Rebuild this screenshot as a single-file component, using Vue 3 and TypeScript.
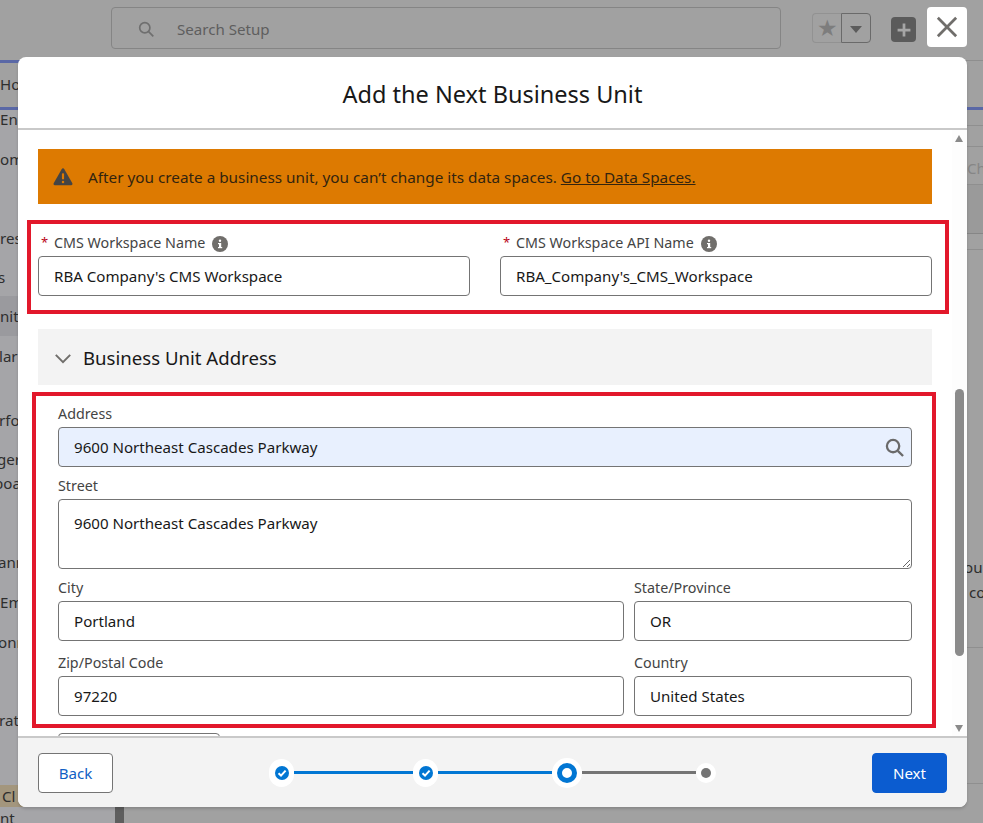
<script setup lang="ts">
import { reactive } from 'vue'

interface SideRow {
  label: string
  height: number
  gap: number
  shift?: number
  tone?: 'active' | 'tan'
}

interface Step {
  id: number
  state: 'done' | 'current' | 'todo'
  lineWidth: number
}

// dimmed setup page behind the modal, only the clipped edge shows
const sideRows: SideRow[] = [
  { label: 'Eng', height: 18, gap: 0 },
  { label: 'om', height: 40, gap: 11 },
  { label: 'res', height: 40, gap: 39 },
  { label: 's', height: 38, gap: 0, shift: -2 },
  { label: 'nit', height: 40, gap: 0, tone: 'active' },
  { label: 'lar', height: 40, gap: 0, shift: -1 },
  { label: 'rfo', height: 40, gap: 24, shift: -1 },
  { label: 'ger', height: 24, gap: 7, shift: -3 },
  { label: 'boa', height: 24, gap: 0, shift: -6 },
  { label: 'ann', height: 40, gap: 47, shift: -2 },
  { label: 'Em', height: 40, gap: 0 },
  { label: 'onn', height: 39, gap: 0, shift: -2 },
  { label: 'rati', height: 40, gap: 39, shift: -1 },
  { label: 'Cl', height: 22, gap: 45, tone: 'tan' },
  { label: 'nt', height: 22, gap: 0 },
]

const steps: Step[] = [
  { id: 1, state: 'done', lineWidth: 119 },
  { id: 2, state: 'done', lineWidth: 114 },
  { id: 3, state: 'current', lineWidth: 114 },
  { id: 4, state: 'todo', lineWidth: 0 },
]

const form = reactive({
  workspaceName: "RBA Company's CMS Workspace",
  workspaceApiName: "RBA_Company's_CMS_Workspace",
  address: '9600 Northeast Cascades Parkway',
  street: '9600 Northeast Cascades Parkway',
  city: 'Portland',
  state: 'OR',
  zip: '97220',
  country: 'United States',
})
</script>

<template>
  <div class="page">
    <header class="top-bar">
      <div class="search">
        <svg class="search-icon" viewBox="0 0 20 20" aria-hidden="true">
          <circle cx="8" cy="8" r="6" />
          <path d="M12.5 12.5 18 18" />
        </svg>
        <span>Search Setup</span>
      </div>
      <div class="favorites">
        <span class="fav-star">★</span>
        <span class="fav-menu"><i></i></span>
      </div>
      <span class="add-btn">
        <svg viewBox="0 0 24 24" aria-hidden="true"><path d="M12 5v14M5 12h14" /></svg>
      </span>
      <span class="close-btn">
        <svg viewBox="0 0 24 24" aria-hidden="true"><path d="M2 2l20 20M22 2 2 22" /></svg>
      </span>
    </header>

    <nav class="nav-bar"><span class="home-tab">Ho</span></nav>

    <div class="setup">
      <aside class="sidebar">
        <div
          v-for="row in sideRows"
          :key="row.label"
          class="side-row"
          :class="row.tone"
          :style="{ height: `${row.height}px`, marginTop: `${row.gap}px`, textIndent: `${row.shift ?? 0}px` }"
        >
          <span>{{ row.label }}</span>
        </div>
        <span class="side-thumb"></span>
      </aside>

      <main class="content">
        <div class="rule-row r15"></div>
        <div class="rule-row r21"></div>
        <div class="rule-row r38 faint">Ch</div>
        <div class="rule-row r49 dark"></div>
        <div class="rule-row r16"></div>
        <div class="rule-row para">
          <p>ou</p>
          <p class="indent">co</p>
        </div>
        <div class="rule-row r136"></div>
      </main>
    </div>

    <section class="modal">
      <h1 class="modal-title">Add the Next Business Unit</h1>

      <div class="modal-body">
        <div class="banner">
          <svg class="warn-icon" viewBox="0 0 24 22" aria-hidden="true">
            <path class="warn-shape" d="M12 1.2c.7 0 1.2.4 1.6 1l9.6 16.9c.6 1.1-.1 2.4-1.4 2.4H2.2C.9 21.500.2 20.200.8 19.100L10.400 2.200c.4-.6.9-1 1.600-1z" />
            <rect class="warn-mark" x="10.700" y="7" width="2.600" height="7.500" rx="1" />
            <circle class="warn-mark" cx="12" cy="17.500" r="1.500" />
          </svg>
          <span>After you create a business unit, you can’t change its data spaces. <a href="#">Go to Data Spaces.</a></span>
        </div>

        <div class="name-row">
          <div class="field">
            <label class="label"><em>*</em><span>CMS Workspace Name</span>
              <svg class="info" viewBox="0 0 16 16" aria-hidden="true">
                <circle cx="8" cy="8" r="8" />
                <rect x="7" y="7" width="2.200" height="5" />
                <rect x="6" y="7" width="2" height="1.200" />
                <rect x="6" y="11" width="4.200" height="1.200" />
                <circle class="info-dot" cx="8" cy="4.700" r="1.200" />
              </svg>
            </label>
            <input v-model="form.workspaceName" type="text" />
          </div>
          <div class="field">
            <label class="label"><em>*</em><span>CMS Workspace API Name</span>
              <svg class="info" viewBox="0 0 16 16" aria-hidden="true">
                <circle cx="8" cy="8" r="8" />
                <rect x="7" y="7" width="2.200" height="5" />
                <rect x="6" y="7" width="2" height="1.200" />
                <rect x="6" y="11" width="4.200" height="1.200" />
                <circle class="info-dot" cx="8" cy="4.700" r="1.200" />
              </svg>
            </label>
            <input v-model="form.workspaceApiName" type="text" />
          </div>
          <span class="callout callout-names"></span>
        </div>

        <div class="section-head">
          <svg viewBox="0 0 20 12" aria-hidden="true"><path d="M2 2l8 8 8-8" /></svg>
          <span>Business Unit Address</span>
        </div>

        <div class="address">
          <div class="field">
            <label class="label">Address</label>
            <div class="lookup">
              <input v-model="form.address" class="autofilled" type="text" />
              <svg viewBox="0 0 20 20" aria-hidden="true">
                <circle cx="8.500" cy="8.500" r="6.500" />
                <path d="M13.500 13.500 19 19" />
              </svg>
            </div>
          </div>
          <div class="field">
            <label class="label">Street</label>
            <textarea v-model="form.street"></textarea>
          </div>
          <div class="split">
            <div class="field">
              <label class="label">City</label>
              <input v-model="form.city" type="text" />
            </div>
            <div class="field">
              <label class="label">State/Province</label>
              <input v-model="form.state" type="text" />
            </div>
          </div>
          <div class="split zip-row">
            <div class="field">
              <label class="label">Zip/Postal Code</label>
              <input v-model="form.zip" type="text" />
            </div>
            <div class="field">
              <label class="label">Country</label>
              <input v-model="form.country" type="text" />
            </div>
          </div>
          <span class="callout callout-address"></span>
          <div class="next-field"></div>
        </div>

        <div class="scrollbar">
          <i class="arrow up"></i>
          <i class="thumb"></i>
          <i class="arrow down"></i>
        </div>
      </div>

      <footer class="modal-footer">
        <button type="button" class="btn back">Back</button>
        <ol class="stepper">
          <template v-for="step in steps" :key="step.id">
            <li class="step" :class="step.state">
              <span class="dot">
                <svg v-if="step.state === 'done'" viewBox="0 0 14 14" aria-hidden="true">
                  <path d="M3.500 7.300 6 9.600l4.600-5" />
                </svg>
              </span>
            </li>
            <li
              v-if="step.lineWidth"
              class="line"
              :class="{ on: step.state === 'done' }"
              :style="{ width: `${step.lineWidth}px` }"
            ></li>
          </template>
        </ol>
        <button type="button" class="btn next">Next</button>
      </footer>
    </section>
  </div>
</template>

<style scoped>
.page {
  position: relative;
  width: 983px;
  height: 823px;
  overflow: hidden;
  background: #a1a1a1;
  color: #2e2e2e;
  font-family: "Noto Sans", "Open Sans", sans-serif;
  font-size: 15.1px;
}

/* background page */
.top-bar {
  display: flex;
  align-items: center;
  height: 60px;
  padding: 0 16px 4px 111px;
  box-sizing: border-box;
}

.search {
  display: flex;
  align-items: center;
  gap: 22px;
  width: 670px;
  height: 42px;
  box-sizing: border-box;
  padding: 2px 0 0 26px;
  border: 1px solid #858585;
  border-radius: 4px;
  color: #5e5e5e;
  font-size: 15.1px;
}

.search-icon {
  width: 17px;
  height: 17px;
  fill: none;
  stroke: #6f6f6f;
  stroke-width: 2;
}

.favorites {
  display: flex;
  width: 59px;
  height: 30px;
  margin-left: 31px;
}

.fav-star {
  width: 29px;
  box-sizing: border-box;
  border: 1px solid #929292;
  border-right: 0;
  border-radius: 4px 0 0 4px;
  color: #7d7d7d;
  font-size: 23px;
  line-height: 27px;
  text-align: center;
}

.fav-menu {
  display: flex;
  align-items: center;
  justify-content: center;
  width: 30px;
  box-sizing: border-box;
  border: 1px solid #6a6a6a;
  border-radius: 0 4px 4px 0;
}

.fav-menu i {
  margin-top: 3px;
  border: 6px solid transparent;
  border-top: 7px solid #5c5c5c;
  border-bottom: 0;
}

.add-btn {
  display: flex;
  align-items: center;
  justify-content: center;
  width: 25px;
  height: 25px;
  margin: 3px 0 0 20px;
  border-radius: 4px;
  background: #5b5b5b;
}

.add-btn svg {
  width: 22px;
  height: 22px;
  fill: none;
  stroke: #a6a6a6;
  stroke-width: 3;
}

.close-btn {
  display: flex;
  align-items: center;
  justify-content: center;
  width: 40px;
  height: 40px;
  margin: 0 0 2px 11px;
  border-radius: 4px;
  background: #fff;
}

.close-btn svg {
  width: 22px;
  height: 22px;
  fill: none;
  stroke: #706e6b;
  stroke-width: 3;
}

.nav-bar {
  height: 50px;
  box-sizing: border-box;
  border-top: 1px solid #8e8e8e;
  border-bottom: 3px solid #5a68a6;
}

.home-tab {
  display: block;
  width: 40px;
  height: 46px;
  box-sizing: border-box;
  margin-top: -1px;
  border-top: 3px solid #5a68a6;
  line-height: 42px;
}

.setup {
  display: flex;
}

.sidebar {
  position: relative;
  flex: none;
  width: 124px;
  height: 713px;
  background: #a5a5a8;
}

.side-row {
  display: flex;
  align-items: center;
  overflow: hidden;
  white-space: nowrap;
}

.side-row span {
  display: block;
}

.side-row.active {
  background: #9a9a9e;
}

.side-row.tan {
  padding-left: 2px;
  background: #a3967d;
}

.side-thumb {
  position: absolute;
  top: 697px;
  right: 0;
  width: 9px;
  height: 16px;
  background: #5e5e5e;
}

.content {
  flex: 1;
  padding-left: 843px;
}

.rule-row {
  margin-left: -843px;
  padding-left: 843px;
  border-bottom: 1px solid #8f8f8f;
  box-sizing: border-box;
}

.r15 { height: 16px; }
.r21 { height: 21px; }
.r38 { display: flex; align-items: center; height: 38px; padding-top: 4px; }
.r49 { height: 49px; }
.r16 { height: 16px; }
.r136 { height: 136px; }
.faint { color: #868686; }
.dark { background: #9a9a9a; border-bottom-color: #868686; }

.para {
  height: 398px;
  padding-top: 305px;
  line-height: 25px;
}

.para p {
  margin: 0;
  text-indent: -3px;
}

.para .indent {
  text-indent: 2px;
}

/* modal */
.modal {
  position: absolute;
  top: 57px;
  left: 18px;
  display: flex;
  flex-direction: column;
  width: 949px;
  height: 750px;
  overflow: hidden;
  border-radius: 8px;
  background: #fff;
  box-shadow: 0 2px 3px rgba(0, 0, 0, 0.16);
}

.modal-title {
  flex: none;
  height: 73px;
  margin: 0;
  box-sizing: border-box;
  border-bottom: 2px solid #c9c9c9;
  color: #181818;
  font-size: 23.500px;
  font-weight: 400;
  line-height: 75px;
  text-align: center;
}

.modal-body {
  position: relative;
  flex: 1;
  min-height: 0;
  overflow: hidden;
  padding: 19px 35px 0 20px;
}

.banner {
  display: flex;
  align-items: center;
  gap: 15px;
  height: 55px;
  padding-left: 15px;
  background: #dd7a01;
  color: #33240f;
  font-size: 15.3px;
}

.banner a {
  color: inherit;
}

.warn-icon {
  width: 20px;
  height: 19px;
}

.warn-shape {
  fill: #444;
}

.warn-mark {
  fill: #dd7a01;
}

.name-row {
  position: relative;
  display: grid;
  grid-template-columns: 1fr 1fr;
  gap: 30px;
  margin-top: 28px;
}

.field {
  display: flex;
  flex-direction: column;
  min-width: 0;
}

.label {
  display: flex;
  align-items: center;
  height: 20px;
  margin-bottom: 4px;
  color: #444;
  font-size: 14.300px;
}

.label em {
  width: 16px;
  padding-left: 3px;
  box-sizing: border-box;
  color: #ba0517;
  font-size: 13px;
  font-style: normal;
}

.info {
  width: 16px;
  height: 16px;
  margin: 3px 0 0 7px;
  fill: #706e6b;
}

.info rect,
.info .info-dot {
  fill: #fff;
}

input,
textarea {
  width: 100%;
  height: 40px;
  box-sizing: border-box;
  padding: 0 15px;
  border: 1px solid #747474;
  border-radius: 4px;
  background: #fff;
  color: #181818;
  font: inherit;
  outline: none;
}

textarea {
  display: block;
  height: 70px;
  padding-top: 12px;
  line-height: 22px;
  resize: vertical;
}

.section-head {
  display: flex;
  align-items: center;
  gap: 11px;
  height: 56px;
  margin-top: 33px;
  padding-left: 16px;
  background: #f3f3f3;
  color: #181818;
  font-size: 18.600px;
}

.section-head svg {
  width: 18px;
  height: 11px;
  margin-top: 3px;
  fill: none;
  stroke: #706e6b;
  stroke-width: 2.200;
}

.address {
  position: relative;
  display: flex;
  flex-direction: column;
  gap: 8px;
  margin-top: 18px;
  padding: 0 20px;
}

.lookup {
  position: relative;
}

.lookup .autofilled {
  background: #e8f0fe;
}

.lookup svg {
  position: absolute;
  top: 11px;
  right: 8px;
  width: 19px;
  height: 19px;
  fill: none;
  stroke: #6a6a6a;
  stroke-width: 2.400;
}

.split {
  display: grid;
  grid-template-columns: 566px 278px;
  gap: 10px;
}

.zip-row {
  margin-top: 3px;
}

.next-field {
  width: 162px;
  height: 20px;
  margin-top: 9px;
  box-sizing: border-box;
  border: 1px solid #747474;
  border-radius: 4px;
}

.callout {
  position: absolute;
  border: 4px solid #e2182b;
  pointer-events: none;
}

.callout-names {
  top: -12px;
  right: -17px;
  bottom: -18px;
  left: -11px;
}

.callout-address {
  top: -11px;
  right: -4px;
  bottom: 25px;
  left: -6px;
}

.scrollbar {
  position: absolute;
  top: 0;
  right: 0;
  bottom: 0;
  width: 15px;
  background: #fdfdfd;
}

.scrollbar i {
  position: absolute;
}

.arrow {
  left: 3px;
  border-right: 4.500px solid transparent;
  border-left: 4.500px solid transparent;
}

.arrow.up {
  top: 5px;
  border-bottom: 7px solid #8a8a8a;
}

.arrow.down {
  bottom: 4px;
  border-top: 7px solid #8a8a8a;
}

.thumb {
  top: 259px;
  left: 3px;
  width: 9px;
  height: 267px;
  border-radius: 5px;
  background: #8b8b8b;
}

.modal-footer {
  flex: none;
  display: flex;
  align-items: center;
  justify-content: space-between;
  height: 71px;
  box-sizing: border-box;
  padding: 0 20px;
  border-top: 2px solid #c9c9c9;
  background: #f3f3f3;
}

.btn {
  width: 75px;
  height: 40px;
  border-radius: 4px;
  font: inherit;
}

.back {
  border: 1px solid #747474;
  background: #fff;
  color: #1160c4;
}

.next {
  border: 1px solid #0b5cd0;
  background: #0b5cd0;
  color: #fff;
}

.stepper {
  display: flex;
  align-items: center;
  margin: 0;
  padding: 0;
  list-style: none;
}

.step {
  display: flex;
  align-items: center;
  justify-content: center;
  border-radius: 50%;
  background: #fff;
}

.step.done {
  width: 25px;
  height: 28px;
  border-radius: 13px;
}

.step.current {
  width: 30px;
  height: 30px;
}

.step.todo {
  width: 20px;
  height: 20px;
}

.dot {
  display: block;
  border-radius: 50%;
}

.done .dot {
  width: 14px;
  height: 14px;
  background: #0176d3;
}

.done svg {
  display: block;
  fill: none;
  stroke: #fff;
  stroke-width: 2;
}

.current .dot {
  width: 20px;
  height: 20px;
  box-sizing: border-box;
  border: 5px solid #0176d3;
  background: #fff;
}

.todo .dot {
  width: 10px;
  height: 10px;
  background: #747474;
}

.line {
  height: 3px;
  background: #747474;
}

.line.on {
  background: #0176d3;
}
</style>

<style>
html,
body {
  margin: 0;
  overflow: hidden;
}
</style>
